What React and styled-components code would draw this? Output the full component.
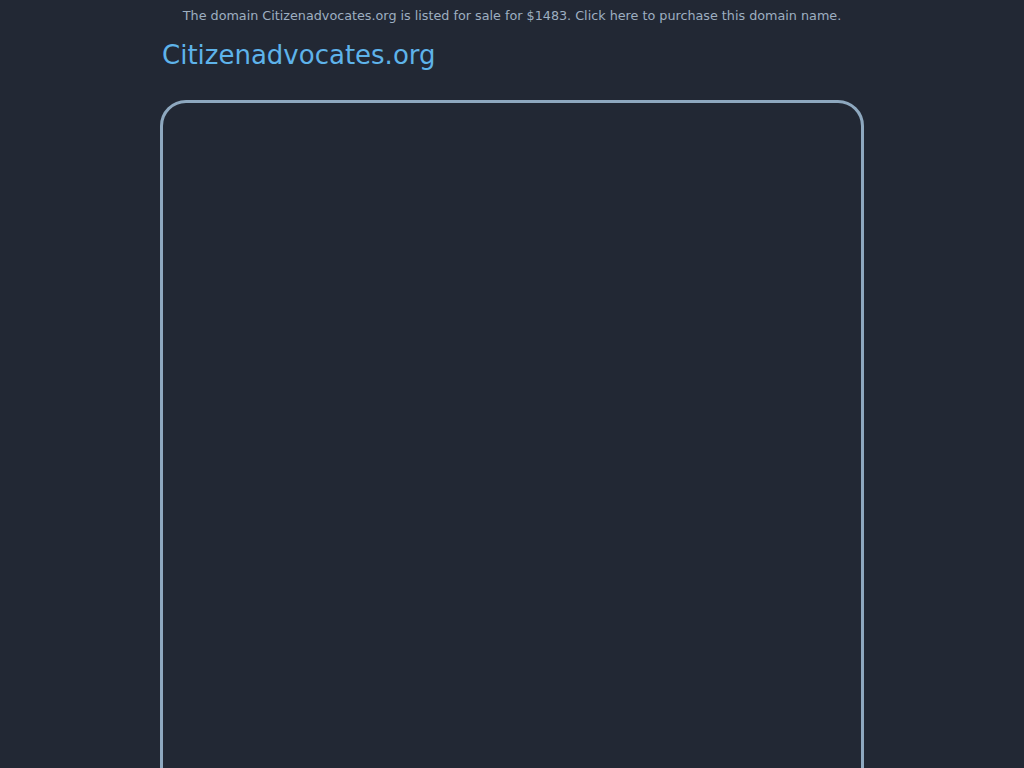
import React from 'react';
import styled, { createGlobalStyle } from 'styled-components';

const GlobalStyle = createGlobalStyle`
  html, body {
    margin: 0;
    padding: 0;
    background: #222834;
    font-family: "DejaVu Sans", Verdana, sans-serif;
  }
`

const Page = styled.div`
  width: 704px;
  margin: 0 auto;
  height: 768px;
  overflow: hidden;
`

const SaleNote = styled.a`
  display: block;
  text-align: center;
  font-size: 12.75px;
  line-height: 16px;
  padding-top: 8px;
  color: #9eafc1;
  text-decoration: none;
`

const Title = styled.h1`
  margin: 0;
  padding: 14px 0 0 2px;
  font-size: 26px;
  line-height: 34px;
  font-weight: normal;
  color: #5eb3ea;
`

const Frame = styled.div`
  margin-top: 28px;
  height: 720px;
  border: 3px solid #8ea8bf;
  border-radius: 26px;
  box-sizing: border-box;
`

export default function App() {
  return (
    <>
      <GlobalStyle />
      <Page>
        <SaleNote href="#">
          The domain Citizenadvocates.org is listed for sale for $1483. Click here to purchase this domain name.
        </SaleNote>
        <Title>Citizenadvocates.org</Title>
        <Frame />
      </Page>
    </>
  );
}
